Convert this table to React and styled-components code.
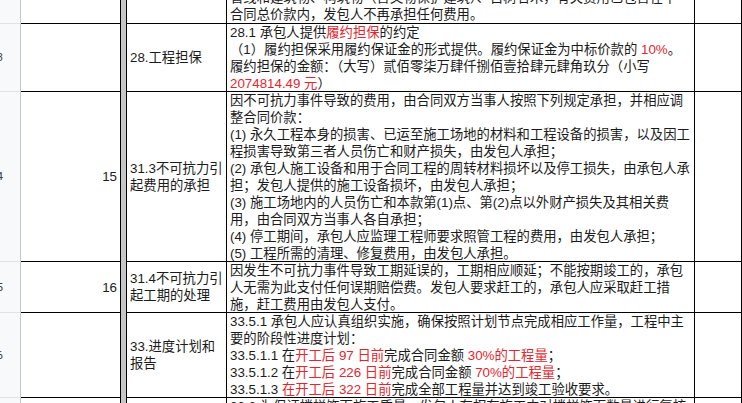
import React from "react";
import styled, { createGlobalStyle } from "styled-components";

const GlobalStyle = createGlobalStyle`
  html, body {
    margin: 0;
    padding: 0;
    background: #fff;
  }
  body {
    font-family: "Liberation Sans", Arial, "Noto Sans CJK SC", sans-serif;
  }
`;

// styles
const Sheet = styled.div`
  width: 742px;
  height: 403px;
  overflow: hidden;
  background: #fff;
  color: #1b1b1b;
  font-size: 13.33px;
`;

const Row = styled.div`
  display: flex;
  height: ${(props) => props.$h}px;
`;

const RowHeader = styled.div`
  flex: 0 0 21px;
  box-sizing: border-box;
  background: #f8f9fa;
  border-right: 1px solid #c4c7c5;
  border-bottom: 1px solid #e2e2e2;
  display: flex;
  align-items: center;
  justify-content: flex-end;
  padding-right: 17px;
  overflow: hidden;
  font-family: Roboto, "Liberation Sans", sans-serif;
  font-size: 11px;
  color: #3c4043;
  white-space: nowrap;
`;

const FrozenBar = styled.div`
  flex: 0 0 5px;
  background: #c6c6c6;
`;

const Cell = styled.div`
  box-sizing: border-box;
  flex: ${(props) => (props.$w ? `0 0 ${props.$w}px` : "1 1 auto")};
  border-right: 1px solid #000;
  border-bottom: 1px solid #000;
  padding: 0 3px;
  line-height: 17px;
  overflow: hidden;
`;

const NumCell = styled(Cell)`
  display: flex;
  align-items: center;
  justify-content: flex-end;
`;

const TitleCell = styled(Cell)`
  border-left: 1px solid #000;
  display: flex;
  flex-direction: column;
  justify-content: center;
`;

const TextCell = styled(Cell)`
  display: flex;
  flex-direction: column;
  justify-content: ${(props) => (props.$bottom ? "flex-end" : "flex-start")};
`;

const Line = styled.div`
  white-space: nowrap;
  flex: 0 0 17px;
`;

const Red = styled.span`
  color: #e2262e;
`;

const rows = [
  {
    h: 24,
    bottom: true,
    text: [
      "管线和建筑物、构筑物（含文物保护建筑）、古树名木，有关费用已包含在中",
      "合同总价款内，发包人不再承担任何费用。",
    ],
  },
  {
    h: 68,
    head: "13",
    title: ["28.工程担保"],
    text: [
      <>28.1 承包人提供<Red>履约担保</Red>的约定</>,
      <>（1）履约担保采用履约保证金的形式提供。履约保证金为中标价款的 <Red>10%</Red>。</>,
      "履约担保的金额：（大写）贰佰零柒万肆仟捌佰壹拾肆元肆角玖分（小写",
      <><Red>2074814.49 元</Red>）</>,
    ],
  },
  {
    h: 170,
    head: "14",
    num: "15",
    title: ["31.3不可抗力引", "起费用的承担"],
    text: [
      "因不可抗力事件导致的费用，由合同双方当事人按照下列规定承担，并相应调",
      "整合同价款：",
      "(1) 永久工程本身的损害、已运至施工场地的材料和工程设备的损害，以及因工",
      "程损害导致第三者人员伤亡和财产损失，由发包人承担；",
      "(2) 承包人施工设备和用于合同工程的周转材料损坏以及停工损失，由承包人承",
      "担；发包人提供的施工设备损坏，由发包人承担；",
      "(3) 施工场地内的人员伤亡和本款第(1)点、第(2)点以外财产损失及其相关费",
      "用，由合同双方当事人各自承担；",
      "(4) 停工期间，承包人应监理工程师要求照管工程的费用，由发包人承担；",
      "(5) 工程所需的清理、修复费用，由发包人承担。",
    ],
  },
  {
    h: 51,
    head: "15",
    num: "16",
    title: ["31.4不可抗力引", "起工期的处理"],
    text: [
      "因发生不可抗力事件导致工期延误的，工期相应顺延；不能按期竣工的，承包",
      "人无需为此支付任何误期赔偿费。发包人要求赶工的，承包人应采取赶工措",
      "施，赶工费用由发包人支付。",
    ],
  },
  {
    h: 85,
    head: "16",
    title: ["33.进度计划和", "报告"],
    text: [
      "33.5.1 承包人应认真组织实施，确保按照计划节点完成相应工作量，工程中主",
      "要的阶段性进度计划：",
      <>33.5.1.1 在<Red>开工后 97 日前</Red>完成合同金额 <Red>30%的工程量</Red>；</>,
      <>33.5.1.2 在<Red>开工后 226 日前</Red>完成合同金额 <Red>70%的工程量</Red>；</>,
      <>33.5.1.3 <Red>在开工后 322 日前</Red>完成全部工程量并达到竣工验收要求。</>,
    ],
  },
  {
    h: 40,
    text: ["33.6 为保证楼梯饰面施工质量，发包人有权在施工中对楼梯饰面数量进行复核"],
  },
];

const SheetRow = ({ row }) => (
  <Row $h={row.h}>
    <RowHeader>{row.head}</RowHeader>
    <NumCell $w={100}>{row.num}</NumCell>
    <FrozenBar />
    <TitleCell $w={101}>
      {(row.title || []).map((t, i) => (
        <Line key={i}>{t}</Line>
      ))}
    </TitleCell>
    <TextCell $w={468} $bottom={row.bottom}>
      {row.text.map((t, i) => (
        <Line key={i}>{t}</Line>
      ))}
    </TextCell>
    <Cell />
  </Row>
);

export default function App() {
  return (
    <>
      <GlobalStyle />
      <Sheet>
        {rows.map((row, i) => (
          <SheetRow key={i} row={row} />
        ))}
      </Sheet>
    </>
  );
}
